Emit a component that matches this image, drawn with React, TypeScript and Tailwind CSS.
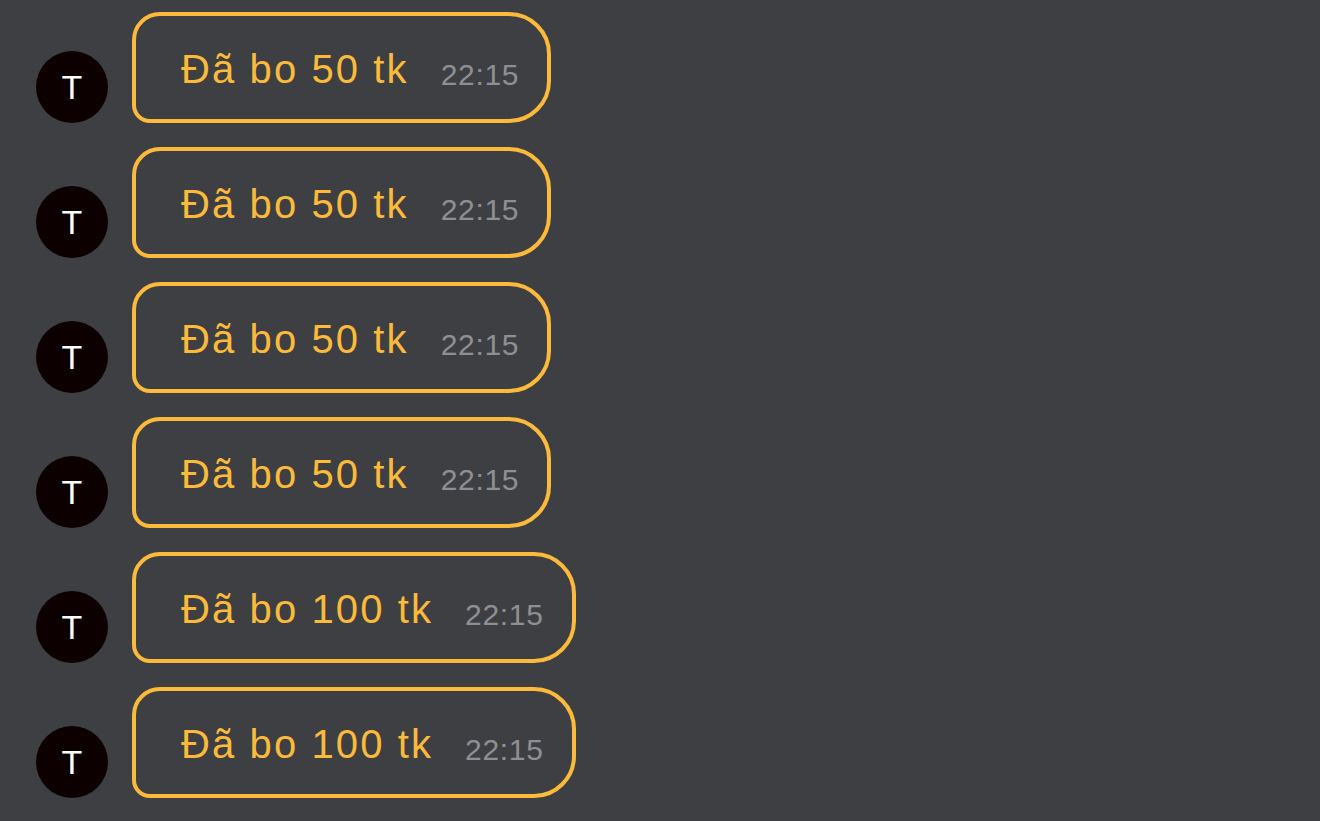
import React from "react";

const messages = [
  { text: "Đã bo 50 tk", time: "22:15" },
  { text: "Đã bo 50 tk", time: "22:15" },
  { text: "Đã bo 50 tk", time: "22:15" },
  { text: "Đã bo 50 tk", time: "22:15" },
  { text: "Đã bo 100 tk", time: "22:15" },
  { text: "Đã bo 100 tk", time: "22:15" },
];

export default function App() {
  return (
    <div
      className="w-[1320px] h-[821px] overflow-hidden bg-[#3e3f43] pl-[36px] pt-[12px] flex flex-col gap-[24px]"
      style={{ fontFamily: '"Liberation Sans", Arial, sans-serif' }}
    >
      {messages.map((m, i) => (
        <div key={i} className="flex items-end gap-[24px]">
          <div className="w-[72px] h-[72px] rounded-full bg-[#0c0000] flex items-center justify-center shrink-0">
            <span className="text-white text-[34px] leading-none">T</span>
          </div>
          <div className="h-[111px] border-[4px] border-[#fbba3a] rounded-tl-[28px] rounded-bl-[18px] rounded-tr-[42px] rounded-br-[42px] pl-[45px] pr-[28px] pt-[33px]">
            <div className="flex items-baseline">
              <span className="text-[40px] leading-none text-[#fbba3a] tracking-[2.1px]">
                {m.text}
              </span>
              <span className="ml-[32px] text-[30px] leading-none text-[#8f8f92] tracking-[0.7px] translate-y-[2px]">
                {m.time}
              </span>
            </div>
          </div>
        </div>
      ))}
    </div>
  );
}
